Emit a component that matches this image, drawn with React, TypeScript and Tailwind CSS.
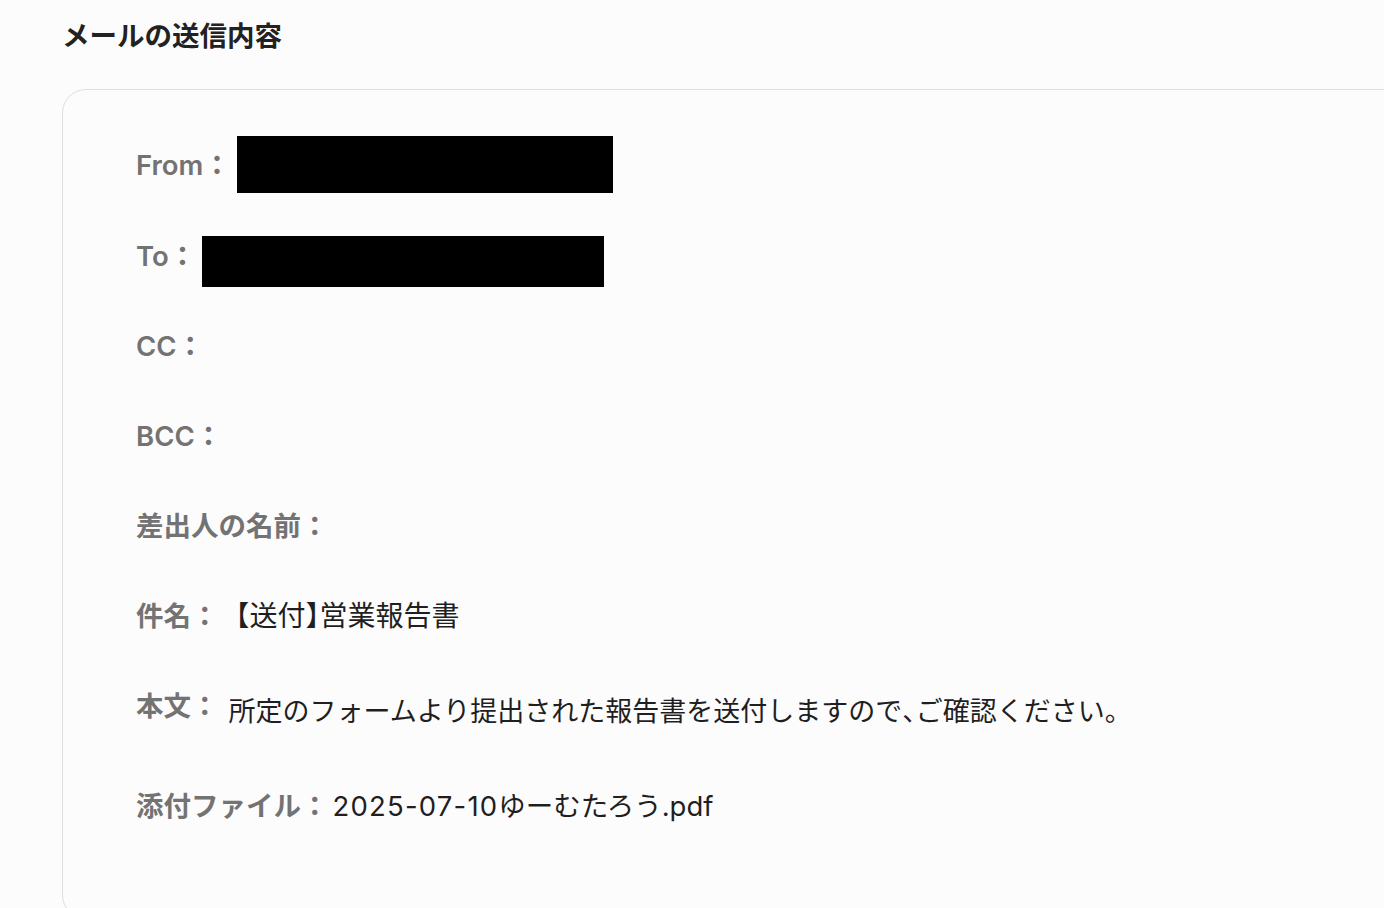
const font = "font-['Inter','Noto_Sans_CJK_JP',sans-serif]";

function Label({ children }: { children: React.ReactNode }) {
  return (
    <span className="shrink-0 text-[27.5px] leading-[40px] font-semibold text-[#737373] mr-[6px]">
      {children}
    </span>
  );
}

function Half({ children }: { children: React.ReactNode }) {
  return <span className="[font-feature-settings:'halt']">{children}</span>;
}

export default function App() {
  return (
    <div className={`h-[908px] w-full overflow-hidden bg-[#fdfcfd] pl-[62px] pt-[18px] ${font}`}>
      <h1 className="text-[27.5px] leading-[36px] font-bold text-[#222]">メールの送信内容</h1>
      <div className="mt-[35px] w-[1400px] h-[830px] rounded-[24px] border-[1.5px] border-[#e0dee2] bg-[#fdfcfd] pl-[73px] pt-[46px] text-[#1f1f1f]">
        <div className="flex items-center">
          <Label>From：</Label>
          <div className="w-[376px] h-[57px] bg-black" />
        </div>
        <div className="flex items-start mt-[43px]">
          <Label>To：</Label>
          <div className="w-[402px] h-[51px] bg-black" />
        </div>
        <div className="flex flex-col gap-[50px] mt-[39px]">
          <div className="flex">
            <Label>CC：</Label>
          </div>
          <div className="flex">
            <Label>BCC：</Label>
          </div>
          <div className="flex">
            <Label>差出人の名前：</Label>
          </div>
          <div className="flex items-start">
            <Label>件名：</Label>
            <span className="text-[28px] leading-[40px] -ml-[3px]">
              【送付<Half>】</Half>営業報告書
            </span>
          </div>
          <div className="flex items-start">
            <Label>本文：</Label>
            <span className="text-[27px] leading-[40px] pt-[6px] ml-[4px]">
              所定のフォームより提出された報告書を送付しますので<Half>、</Half>ご確認ください。
            </span>
          </div>
          <div className="flex items-start mt-[4px]">
            <Label>添付ファイル：</Label>
            <span className="text-[27.5px] leading-[40px] -ml-[2px]">
              <span className="tracking-[1.2px]">2025-07-10</span>ゆーむたろう.pdf
            </span>
          </div>
        </div>
      </div>
    </div>
  );
}
